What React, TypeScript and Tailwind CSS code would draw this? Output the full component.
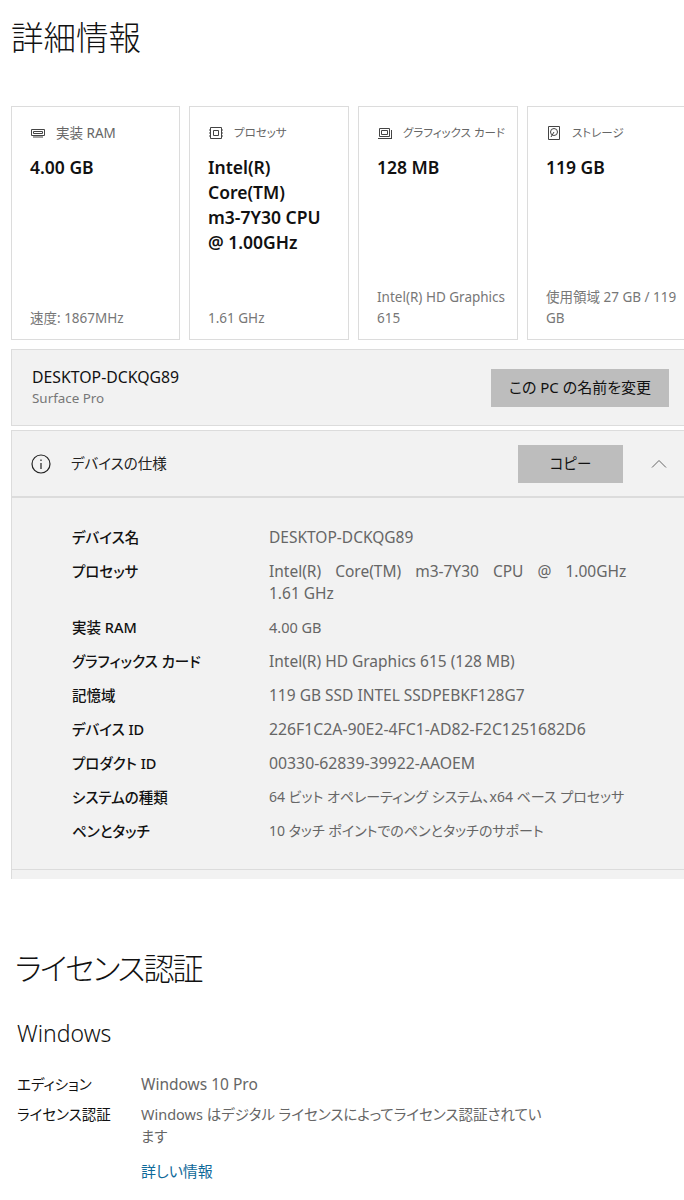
import React from 'react';

const specs = [
  { label: 'デバイス名', value: 'DESKTOP-DCKQG89', size: 'text-[15.5px]' },
  { label: 'プロセッサ', value: 'Intel(R) Core(TM) m3-7Y30 CPU @ 1.00GHz', sub: '1.61 GHz', size: 'text-[15.5px]' },
  { label: '実装 RAM', value: '4.00 GB', size: 'text-[14.5px]' },
  { label: 'グラフィックス カード', value: 'Intel(R) HD Graphics 615 (128 MB)', size: 'text-[15.5px]' },
  { label: '記憶域', value: '119 GB SSD INTEL SSDPEBKF128G7', size: 'text-[15.5px]' },
  { label: 'デバイス ID', value: '226F1C2A-90E2-4FC1-AD82-F2C1251682D6', size: 'text-[15.8px]' },
  { label: 'プロダクト ID', value: '00330-62839-39922-AAOEM', size: 'text-[15.8px]' },
  { label: 'システムの種類', value: '64 ビット オペレーティング システム、x64 ベース プロセッサ', size: 'text-[14px]' },
  { label: 'ペンとタッチ', value: '10 タッチ ポイントでのペンとタッチのサポート', size: 'text-[14px]' },
];

function RamIcon() {
  return (
    <svg className="shrink-0" width="16" height="16" viewBox="0 0 16 16" fill="none" stroke="#444" strokeWidth="1">
      <path d="M1.5 4.5h13v6h-13z" />
      <path d="M3.5 6.5h9v2h-9z" />
      <path d="M3 12h10" />
    </svg>
  );
}

function CpuIcon() {
  return (
    <svg className="shrink-0" width="16" height="16" viewBox="0 0 16 16" fill="none" stroke="#444" strokeWidth="1">
      <path d="M2.5 2.5h11v11h-11z" />
      <path d="M5.5 5.5h5v5h-5z" />
      <path d="M1 5h1M1 8h1M1 11h1M14 5h1M14 8h1M14 11h1" />
    </svg>
  );
}

function GpuIcon() {
  return (
    <svg className="shrink-0" width="16" height="16" viewBox="0 0 16 16" fill="none" stroke="#444" strokeWidth="1">
      <path d="M2.5 3.5h10v8h-10z" />
      <path d="M4.5 5.5h6v4h-6z" />
      <path d="M1 13.5h14" />
      <path d="M14.5 5v8" />
    </svg>
  );
}

function DiskIcon() {
  return (
    <svg className="shrink-0" width="16" height="16" viewBox="0 0 16 16" fill="none" stroke="#444" strokeWidth="1">
      <path d="M2.5 1.5h11v13h-11z" />
      <circle cx="8" cy="7" r="3.5" />
      <path d="M8 7l-3 5" />
    </svg>
  );
}

function Card({ icon, title, titleSize, value, foot, className }: { icon: React.ReactNode; title: string; titleSize: string; value: string; foot: string; className: string }) {
  return (
    <div className={`flex h-[234px] shrink-0 flex-col border border-[#dcdcdc] bg-white pr-2 pl-[18px] ${className}`}>
      <div className={`mt-[16px] flex h-5 items-center gap-[10px] whitespace-nowrap text-[#666] ${titleSize}`}>
        {icon}
        <span>{title}</span>
      </div>
      <div className="mt-[12px] whitespace-pre-line text-[17.5px] leading-[25px] font-semibold text-[#111]">{value}</div>
      <div className="mt-auto mb-[10px] text-[13.5px] leading-[21px] text-[#777]">{foot}</div>
    </div>
  );
}

export default function App() {
  return (
    <div className="h-[1200px] w-[684px] overflow-hidden bg-white font-['Noto_Sans','Noto_Sans_CJK_JP',sans-serif] [font-feature-settings:'palt']">
      <h1 className="h-[106px] pt-[14px] pl-[11px] text-[32.5px] leading-[48px] font-light text-[#111]">詳細情報</h1>

      <div className="ml-[11px] flex gap-[9px]">
        <Card className="w-[169px]" icon={<RamIcon />} title="実装 RAM" titleSize="text-[13.5px]" value="4.00 GB" foot="速度: 1867MHz" />
        <Card className="w-[160px]" icon={<CpuIcon />} title="プロセッサ" titleSize="text-[11.5px]" value={'Intel(R)\nCore(TM)\nm3-7Y30 CPU\n@ 1.00GHz'} foot="1.61 GHz" />
        <Card className="w-[160px]" icon={<GpuIcon />} title="グラフィックス カード" titleSize="text-[11.5px]" value="128 MB" foot="Intel(R) HD Graphics 615" />
        <Card className="w-[160px]" icon={<DiskIcon />} title="ストレージ" titleSize="text-[11.5px]" value="119 GB" foot="使用領域 27 GB / 119 GB" />
      </div>

      <div className="mt-[9px] ml-[11px] flex h-[77px] items-center justify-between border border-r-0 border-[#dcdcdc] bg-[#f2f2f2] pr-[15px] pl-[20px]">
        <div>
          <div className="text-[15.8px] leading-[21px] text-[#111]">DESKTOP-DCKQG89</div>
          <div className="text-[13.4px] leading-[21px] text-[#777]">Surface Pro</div>
        </div>
        <button className="h-[38px] w-[178px] bg-[#bdbdbd] text-[15px] text-[#111]">この PC の名前を変更</button>
      </div>

      <div className="mt-[4px] ml-[11px] h-[449px] border-t border-l border-[#dcdcdc] bg-[#f2f2f2]">
        <div className="flex h-[67px] items-center border-b-2 border-[#dcdcdc] pl-[19px]">
          <svg className="shrink-0" width="20" height="20" viewBox="0 0 20 20" fill="none" stroke="#222" strokeWidth="1.2">
            <circle cx="10" cy="10" r="9" />
            <path d="M10 9v6M10 5.5v1.5" />
          </svg>
          <span className="ml-[20px] text-[14.5px] text-[#222]">デバイスの仕様</span>
          <button className="mr-[28px] ml-auto h-[38px] w-[105px] bg-[#bdbdbd] text-[14.5px] text-[#111]">コピー</button>
          <svg className="mr-[17px] shrink-0" width="16" height="16" viewBox="0 0 16 16" fill="none" stroke="#666" strokeWidth="1">
            <path d="M1 11.5 8 4.5l7 7" />
          </svg>
        </div>

        <div className="flex h-[372px] flex-col gap-[12px] border-b border-[#dcdcdc] pt-[28px] pl-[60px]">
          {specs.map(row => (
            <div key={row.label} className="flex text-[14.5px] leading-[22px]">
              <div className="w-[197px] shrink-0 font-medium text-[#111]">{row.label}</div>
              <div className={`text-[#666] ${row.size}`}>
                <div className={row.sub ? '[word-spacing:10px]' : ''}>{row.value}</div>
                {row.sub && <div>{row.sub}</div>}
              </div>
            </div>
          ))}
        </div>
      </div>

      <h2 className="mt-[66px] pl-[15px] text-[31px] leading-[46px] font-light tracking-[-2px] text-[#111]">ライセンス認証</h2>

      <h3 className="mt-[26px] pl-[17px] text-[23px] leading-[32px] font-light text-[#111]">Windows</h3>

      <div className="mt-[24px] grid grid-cols-[124px_404px] gap-y-[8px] pl-[17px] text-[14.5px] leading-[22px]">
        <div className="text-[#111]">エディション</div>
        <div className="text-[15.5px] text-[#666]">Windows 10 Pro</div>
        <div className="text-[#111]">ライセンス認証</div>
        <div className="text-[#666]">Windows はデジタル ライセンスによってライセンス認証されています</div>
      </div>

      <a className="mt-[13px] ml-[141px] block text-[15px] leading-[22px] text-[#0f6a9a]">詳しい情報</a>
    </div>
  );
}
